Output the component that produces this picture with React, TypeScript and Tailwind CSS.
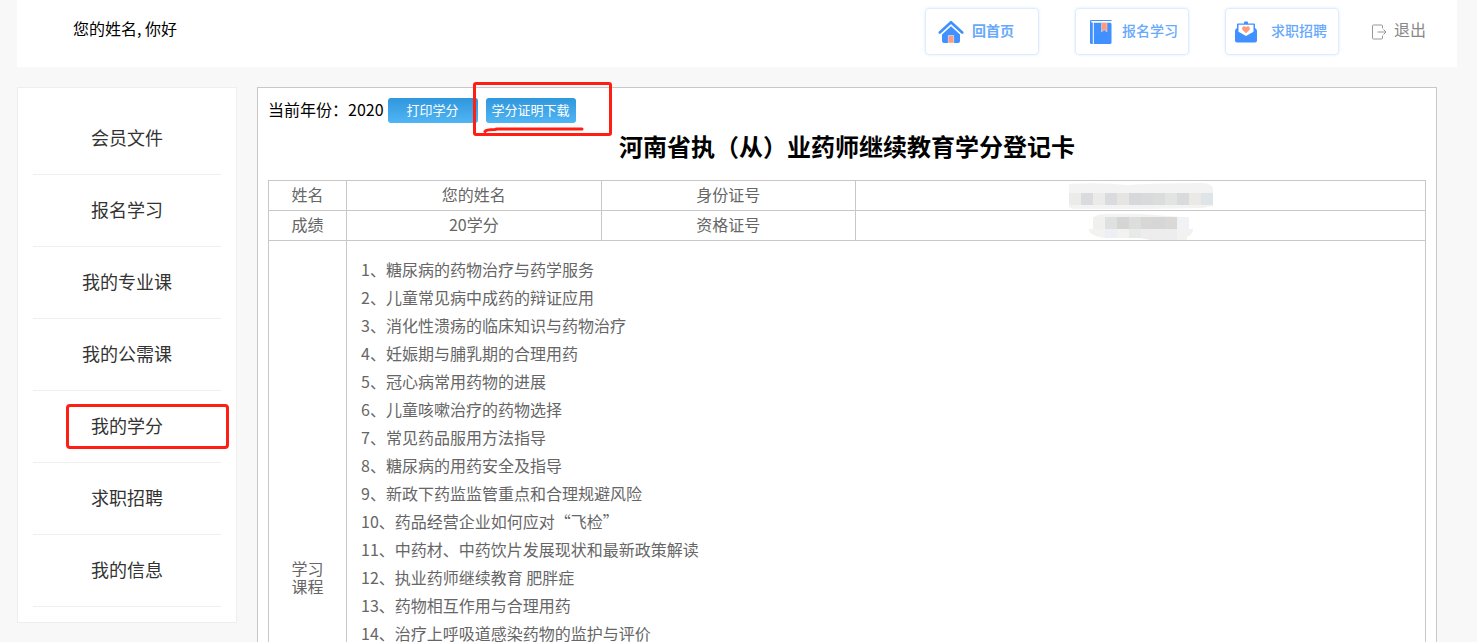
import React from "react"

const menu = [
  "会员文件",
  "报名学习",
  "我的专业课",
  "我的公需课",
  "我的学分",
  "求职招聘",
  "我的信息",
]

const courses = [
  "糖尿病的药物治疗与药学服务",
  "儿童常见病中成药的辩证应用",
  "消化性溃疡的临床知识与药物治疗",
  "妊娠期与脯乳期的合理用药",
  "冠心病常用药物的进展",
  "儿童咳嗽治疗的药物选择",
  "常见药品服用方法指导",
  "糖尿病的用药安全及指导",
  "新政下药监监管重点和合理规避风险",
  "药品经营企业如何应对“飞检”",
  "中药材、中药饮片发展现状和最新政策解读",
  "执业药师继续教育 肥胖症",
  "药物相互作用与合理用药",
  "治疗上呼吸道感染药物的监护与评价",
]

const HomeIcon = () => (
  <svg width="26" height="24" viewBox="0 0 26 24" fill="none" aria-hidden="true">
    <path d="M1.800 12.500 13 2.200 24.200 12.500" stroke="#4090ff" strokeWidth="2.600" strokeLinecap="round" strokeLinejoin="round" />
    <path d="M13 6.300 22 14.500V21a2 2 0 0 1-2 2H6a2 2 0 0 1-2-2v-6.500Z" fill="#4090ff" />
    <path d="M10.300 15.500h5.400V23h-5.400z" fill="#ff9a7b" stroke="#fff" strokeWidth=".5" />
  </svg>
)

const BookIcon = () => (
  <svg width="24" height="26" viewBox="0 0 24 26" fill="none" aria-hidden="true">
    <path d="M1.600 24V2.500Q1.600 1.500 2.600 1.500H22.500" stroke="#4090ff" strokeWidth="1.200" />
    <path d="M1 3.500h2.800V25H2.500A1.500 1.500 0 0 1 1 23.500Z" fill="#4090ff" />
    <path d="M4.800 3.700H21A1.500 1.500 0 0 1 22.500 5v18.500A1.500 1.500 0 0 1 21 25H4.800Z" fill="#4090ff" />
    <path d="M12.500 3.500H18V13l-2.750-2.200L12.500 13Z" fill="#ff9a7b" stroke="#fff" strokeWidth=".4" />
  </svg>
)

const MailIcon = () => (
  <svg width="22" height="22" viewBox="0 0 22 22" fill="none" aria-hidden="true">
    <path d="M3 2.500h6V1.600Q9 .6 10 .6h2q1 0 1 1v.9h6q1 0 1 1V7q2 1 2 3v9.500a2 2 0 0 1-2 2H2a2 2 0 0 1-2-2V10q0-2 2-3V3.500q0-1 1-1Z" fill="#4090ff" />
    <path d="M3.500 3.700h15v7L11 15l-7.500-4.300Z" fill="#fff" />
    <path d="M11 12.200 7.600 8.900C5.900 6.500 9 3.800 11 6.200c2-2.400 5.100.3 3.400 2.700Z" fill="#ff9a7b" />
  </svg>
)

const ExitIcon = () => (
  <svg width="16" height="16" viewBox="0 0 16 16" fill="none" stroke="#999" aria-hidden="true">
    <path d="M11.500 4.500V2a1 1 0 0 0-1-1h-8a1 1 0 0 0-1 1v12a1 1 0 0 0 1 1h8a1 1 0 0 0 1-1v-2.500M6.500 8H15M12.500 5.500 15 8l-2.500 2.500" />
  </svg>
)

// blurred-out numbers, drawn as blocks of 12px
const IdMosaic = () => (
  <svg width="146" height="28" viewBox="0 0 146 28" role="img" aria-label="身份证号" className="mx-auto">
    <path d="M1 2Q30 0 60 3q30-2 75-2 10 1 10 6v17l-10 2-60 1H6q-5-1-5-3Z" fill="#f3f3f3" />
    {["#ebebea", "#d9dbde", "#ebebea", "#d9dbde", "#e7e5e3", "#d6d8db", "#d9dadb", "#dbdcdc", "#e2e3e3", "#d9dadb", "#ece8e5", "#dfe4e8"].map(
      (color, i) => (
        <rect key={i} x={1 + i * 12} y="11" width="12" height="12" fill={color} />
      )
    )}
  </svg>
)

const CertMosaic = () => (
  <svg width="104" height="28" viewBox="0 0 104 28" role="img" aria-label="资格证号" className="mx-auto">
    <path d="M4 6q4-4 12-4h36l40 3q8 1 8 6v6h4q0 6-6 8v3H62l-10-2H16Q0 24 0 17h4Z" fill="#f2f2f1" />
    {["#f0f0ef", "#dfe1e1", "#d5d5d6", "#dcdddd", "#d9d7d5", "#d4d6d8", "#dad9d7", "#f0f2f5"].map(
      (color, i) => (
        <rect key={i} x={4 + i * 12} y="5" width="12" height="12" fill={color} />
      )
    )}
    <path d="M16 17h12v9H16z" fill="#eceff3" />
    <path d="M40 17h12v9H40z" fill="#e7eae9" />
    <path d="M52 17h36v11H62l-10-2Z" fill="#ededed" />
  </svg>
)

const links = [
  { label: "回首页", icon: <HomeIcon />, style: "pl-3 gap-2 font-bold" },
  { label: "报名学习", icon: <BookIcon />, style: "pl-[13px] gap-[9px] font-medium" },
  { label: "求职招聘", icon: <MailIcon />, style: "pl-[9px] gap-[14px] font-medium" },
]

const cell = "border border-[#c8c8c8] text-center"
const textCell = "border border-[#c8c8c8] pb-[3px] text-center"
const printButton =
  "h-[25px] w-[90px] rounded-[3px] bg-linear-to-b from-[#2f97dd] to-[#50b5f3] pb-[2px] text-[13px] text-white"

const App = () => {
  return (
    <div className="min-h-screen bg-[#f8f8f8] pl-[17px] pr-5 font-['Noto_Sans_CJK_SC',sans-serif] text-base text-black">
      <header className="flex h-[67px] items-start justify-between bg-white pl-14 pr-[31px]">
        <p className="pt-4 leading-6">您的姓名, 你好</p>
        <nav className="flex items-start gap-9 pt-2">
          {links.map((link) => (
            <a
              key={link.label}
              href="#"
              className={`flex h-[47px] w-[114px] items-center rounded-[4px] border border-[#deecfb] text-sm text-[#67a9fb] shadow-[0_0_3px_#d9eafc] ${link.style}`}
            >
              {link.icon}
              <span className="pb-[3px]">{link.label}</span>
            </a>
          ))}
          <a href="#" className="-ml-1 flex h-[47px] items-center gap-[7px] text-[#888]">
            <ExitIcon />
            <span className="pb-[6px]">退出</span>
          </a>
        </nav>
      </header>

      <div className="mr-5 mt-5 flex items-start gap-5">
        <aside className="w-[220px] shrink-0 border border-[#eee] bg-white p-[15px]">
          <ul>
            {menu.map((item) => (
              <li key={item} className="relative border-b border-[#eee]">
                <a href="#" className="block h-[71px] text-center text-lg leading-[68px] text-[#333]">
                  {item}
                </a>
                {item === "我的学分" && (
                  <span className="pointer-events-none absolute left-[33px] right-[-8px] top-[13px] h-[45px] rounded-[4px] border-3 border-[#ff1e12]" />
                )}
              </li>
            ))}
          </ul>
        </aside>

        <main className="relative min-w-0 flex-1 border border-[#c8c8c8] bg-white p-[10px]">
          <div className="flex h-[25px] items-center gap-1">
            <span className="pb-1">当前年份：2020</span>
            <div className="flex gap-2">
              <button type="button" className={printButton}>打印学分</button>
              <button type="button" className={printButton}>学分证明下载</button>
            </div>
          </div>
          <h1 className="mb-4 mt-1 text-center text-2xl font-bold leading-[37px]">
            河南省执（从）业药师继续教育学分登记卡
          </h1>

          <table className="w-full table-fixed border-collapse text-[#666]">
            <colgroup>
              <col className="w-[78px]" />
              <col className="w-[22%]" />
              <col className="w-[22%]" />
              <col />
            </colgroup>
            <tbody>
              <tr className="h-[30px]">
                <td className={textCell}>姓名</td>
                <td className={textCell}>您的姓名</td>
                <td className={textCell}>身份证号</td>
                <td className={cell}><IdMosaic /></td>
              </tr>
              <tr className="h-[30px]">
                <td className={textCell}>成绩</td>
                <td className={textCell}>20学分</td>
                <td className={textCell}>资格证号</td>
                <td className={cell}><CertMosaic /></td>
              </tr>
              <tr className="h-[676px]">
                <td className={`${textCell} px-5 leading-[18px]`}>学习课程</td>
                <td colSpan={3} className="border border-[#c8c8c8] px-[14px] py-[14px] align-top">
                  {courses.map((course, i) => (
                    <p key={course} className="leading-7">
                      {i + 1}、{course}
                    </p>
                  ))}
                </td>
              </tr>
            </tbody>
          </table>

          <svg
            className="pointer-events-none absolute -top-2 left-[214px]"
            width="142"
            height="58"
            viewBox="0 0 142 58"
            fill="none"
            stroke="#ff1e12"
            strokeWidth="3"
            strokeLinecap="round"
            aria-hidden="true"
          >
            <rect x="2.500" y="3.500" width="136" height="51" rx="1.500" />
            <path d="M13 51.500q1-2 10-2l2-.5h85" />
          </svg>
        </main>
      </div>
    </div>
  )
}

export default App
